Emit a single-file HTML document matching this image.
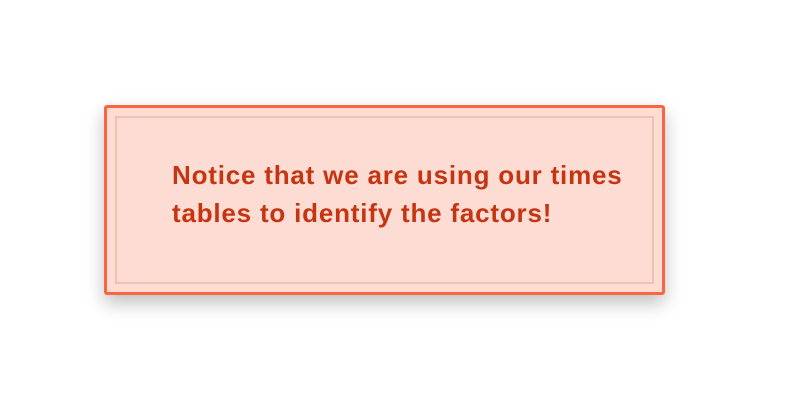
<!DOCTYPE html>
<html><head><style>
html,body{margin:0;padding:0;background:#fff;width:800px;height:400px;overflow:hidden}
.outer{position:absolute;left:104px;top:105px;width:555px;height:184px;border:3px solid #fd6440;border-radius:3px;background:#fddcd4;box-shadow:0 8px 18px rgba(0,0,0,0.25)}
.inner{position:absolute;left:8px;top:8px;right:8px;bottom:8px;border:2px solid #efc0b4}
.txt{position:absolute;font-family:"Liberation Sans",sans-serif;font-weight:bold;font-size:26px;letter-spacing:0.8px;line-height:38px;color:#c63512;white-space:nowrap}
</style></head><body>
<div class="outer"><div class="inner"></div></div>
<div class="txt" style="left:172px;top:156px">Notice that we are using our times<br>tables to identify the factors!</div>
</body></html>
